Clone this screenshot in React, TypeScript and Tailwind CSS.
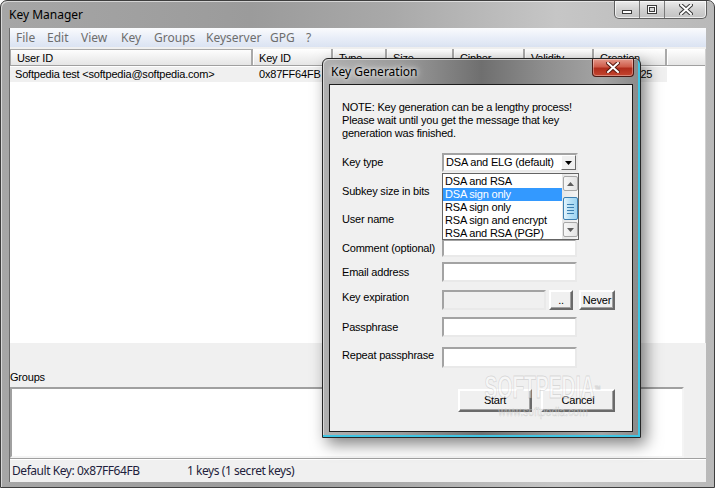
import React from "react";

const ui = "font-['Noto_Sans','Open_Sans',sans-serif]";

function CaptionButtons() {
  return (
    <div className="mr-[7px] flex h-[18px] overflow-hidden rounded-b-[5px] border border-t-0 border-[#5f5f5f] bg-[linear-gradient(#ececec,#d2d2d2_50%,#c2c2c2)] shadow-[inset_0_0_0_1px_rgba(255,255,255,0.7)]">
      <div className="flex w-[25px] items-end justify-center border-r border-[#7a7a7a] pb-[4px]">
        <div className="h-[4px] w-[10px] border border-[#3c3c3c] bg-white" />
      </div>
      <div className="flex w-[25px] items-center justify-center border-r border-[#7a7a7a]">
        <div className="h-[9px] w-[10px] border border-[#3c3c3c] bg-white p-[1px]">
          <div className="h-full w-full border border-[#3c3c3c] bg-[#d8d8d8]" />
        </div>
      </div>
      <div className="flex w-[41px] items-center justify-center">
        <svg width="14" height="11" viewBox="0 0 14 11">
          <path d="M2 1 L12 10 M12 1 L2 10" stroke="#3c3c3c" strokeWidth="4" strokeLinecap="square" />
          <path d="M2 1 L12 10 M12 1 L2 10" stroke="#ffffff" strokeWidth="2" strokeLinecap="square" />
        </svg>
      </div>
    </div>
  );
}

function Field({ disabled, className = "w-[135px]" }: { disabled?: boolean; className?: string }) {
  return (
    <div
      className={`h-full border-2 border-t-[#a3a3a3] border-l-[#a3a3a3] border-r-[#e9e9e9] border-b-[#e9e9e9] ${
        disabled ? "bg-[#f0f0f0]" : "bg-white"
      } ${className}`}
    />
  );
}

function Btn({ label, className }: { label: string; className: string }) {
  return (
    <div
      className={`flex items-center justify-center border-2 border-t-white border-l-white border-r-[#6a6a6a] border-b-[#6a6a6a] bg-[#f0f0f0] shadow-[inset_-1px_-1px_0_#a0a0a0] ${className}`}
    >
      {label}
    </div>
  );
}

function ScrollArrow({ up }: { up?: boolean }) {
  return (
    <div className="flex h-[15px] w-[15px] items-center justify-center rounded-[2px] border border-[#a7a7a7] bg-[linear-gradient(90deg,#f7f7f7,#e3e3e3)]">
      <svg width="7" height="4" viewBox="0 0 7 4">
        <path d={up ? "M0 4 L3.5 0 L7 4 Z" : "M0 0 L3.5 4 L7 0 Z"} fill="#5c5c5c" />
      </svg>
    </div>
  );
}

function Row({
  label,
  top,
  h,
  lift = "",
  children,
}: {
  label: string;
  top: string;
  h: string;
  lift?: string;
  children?: React.ReactNode;
}) {
  return (
    <div className={`flex items-center ${top} ${h}`}>
      <span className={`w-[100px] shrink-0 ${lift}`}>{label}</span>
      {children}
    </div>
  );
}

const columns = [
  { name: "User ID", w: "w-[243px]" },
  { name: "Key ID", w: "w-[80px]" },
  { name: "Type", w: "w-[54px]" },
  { name: "Size", w: "w-[67px]" },
  { name: "Cipher", w: "w-[71px]" },
  { name: "Validity", w: "w-[69px]" },
  { name: "Creation", w: "w-[73px]" },
];

const menu = [
  { name: "File", w: "w-[31px]" },
  { name: "Edit", w: "w-[34px]" },
  { name: "View", w: "w-[40px]" },
  { name: "Key", w: "w-[33px]" },
  { name: "Groups", w: "w-[52px]" },
  { name: "Keyserver", w: "w-[64px]" },
  { name: "GPG", w: "w-[36px]" },
  { name: "?", w: "w-[12px]" },
];

export default function App() {
  return (
    <div className="relative h-[488px] w-[715px] overflow-hidden bg-white font-['Liberation_Sans',Arial,sans-serif] text-[11px] tracking-[-0.2px] text-black">
      {/* main window */}
      <div className="flex h-full w-full flex-col rounded-t-[7px] border border-[#3e3e3e] bg-[linear-gradient(90deg,#a6a6a6,#9b9b9b_35%,#a9a9a9_55%,#c6c6c6_78%,#b9b9b9)] shadow-[inset_1px_1px_0_rgba(255,255,255,0.55)]">
        <div className="flex h-[27px] shrink-0 items-start justify-between">
          <span className={`${ui} pl-[8px] pt-[5px] text-[12px] tracking-normal text-black`}>Key Manager</span>
          <CaptionButtons />
        </div>

        <div className="mx-[8px] mb-[5px] flex flex-1 flex-col border-l border-[#6c6c6c] bg-[#f0f0f0]">
          {/* menu */}
          <div className={`${ui} flex h-[19px] items-center bg-[linear-gradient(#fafbfd,#e9eef8_50%,#dbe3f2)] pl-[6px] text-[12px] tracking-normal text-[#6d6d6d]`}>
            {menu.map((m) => (
              <span key={m.name} className={m.w}>
                {m.name}
              </span>
            ))}
          </div>

          {/* key list */}
          <div className="mt-[2px] flex h-[294px] flex-col border-r border-[#d0d0d0] bg-white">
            <div className="flex h-[17px] border-b border-[#a0a0a0] bg-[linear-gradient(#ffffff,#f2f2f2_50%,#e6e6e6)]">
              {columns.map((c, i) => (
                <div
                  key={c.name}
                  className={`${c.w} flex items-end border-r-2 border-r-[#a9a9a9] pl-[6px] leading-[13px] ${
                    i === 0 ? "border-l border-t border-[#a9a9a9] pl-[5px]" : "shadow-[inset_1px_0_0_#fff]"
                  }`}
                >
                  {c.name}
                </div>
              ))}
              <div className="flex-1 shadow-[inset_1px_0_0_#fff]" />
            </div>
            <div className="mt-[1px] flex h-[15px] w-[657px] items-center bg-[#f0f0f0]">
              <span className="w-[243px] pl-[5px]">Softpedia test &lt;softpedia@softpedia.com&gt;</span>
              <span className="w-[80px] pl-[6px]">0x87FF64FB</span>
              <span className="w-[54px] pl-[6px]">pub/sec</span>
              <span className="w-[67px] pl-[6px]">1024</span>
              <span className="w-[71px] pl-[6px]">DSA/ELG</span>
              <span className="w-[69px] pl-[6px]">Ultimate</span>
              <span className="pl-[4px]">2009-03-25</span>
            </div>
          </div>

          {/* groups */}
          <div className="flex h-[44px] items-end pb-[2px]">Groups</div>
          <div className="h-[71px] w-[674px] border-2 border-t-[#a0a0a0] border-l-[#a0a0a0] border-r-[#f4f4f4] border-b-[#f4f4f4] bg-white" />

          {/* status bar */}
          <div className={`${ui} flex flex-1 items-center border-t border-[#a0a0a0] pl-[2px] text-[12px] tracking-[-0.45px] text-[#1e1e3c] shadow-[inset_0_1px_0_#fff]`}>
            <span className="w-[175px]">Default Key: 0x87FF64FB</span>
            <span>1 keys (1 secret keys)</span>
          </div>
        </div>
      </div>

      {/* Key Generation dialog */}
      <div className="absolute left-[322px] top-[58px] flex h-[380px] w-[319px] flex-col rounded-t-[6px] border border-[#262626] bg-[linear-gradient(90deg,#b0b0b0,#9a9a9a_25%,#6f6f6f_50%,#8e8e8e_70%,#a4a4a4_88%,#8a8a8a)] shadow-[inset_-2px_-2px_0_#3fc6e4,inset_1px_1px_0_rgba(255,255,255,0.5),5px_6px_16px_rgba(0,0,0,0.5)]">
        <div className="flex h-[25px] shrink-0 items-start justify-between">
          <span className={`${ui} pl-[8px] pt-[4px] text-[12px] tracking-normal text-black [text-shadow:0_0_8px_#fff,0_0_4px_#fff]`}>
            Key Generation
          </span>
          <div className="mr-[6px] flex h-[18px] w-[42px] items-center justify-center rounded-b-[4px] border border-t-0 border-[#4a1a14] bg-[linear-gradient(#e4988a,#cf5d4b_45%,#b02d1c_55%,#c4452f)] shadow-[inset_0_0_0_1px_rgba(255,255,255,0.35)]">
            <svg width="14" height="11" viewBox="0 0 14 11">
              <path d="M2 1 L12 10 M12 1 L2 10" stroke="#5a1b12" strokeWidth="4" strokeLinecap="square" />
              <path d="M2 1 L12 10 M12 1 L2 10" stroke="#ffffff" strokeWidth="2" strokeLinecap="square" />
            </svg>
          </div>
        </div>

        <div className="mb-[5px] ml-[6px] mr-[7px] flex-1 border border-[#1c1c1c] bg-[#f0f0f0]">
          <div className="relative h-full pl-[12px]">
            <p className="pt-[16px] leading-[13px]">
              NOTE: Key generation can be a lengthy process!
              <br />
              Please wait until you get the message that key
              <br />
              generation was finished.
            </p>

            <Row label="Key type" top="mt-[13px]" h="h-[19px]">
              <div className="flex h-full w-[136px] items-center border-2 border-t-[#a3a3a3] border-l-[#a3a3a3] border-r-[#e9e9e9] border-b-[#e9e9e9] bg-white">
                <span className="flex-1 pl-[2px]">DSA and ELG (default)</span>
                <div className="flex h-[15px] w-[15px] items-center justify-center border border-t-white border-l-white border-r-[#6a6a6a] border-b-[#6a6a6a] bg-[#f0f0f0]">
                  <svg width="7" height="4" viewBox="0 0 7 4">
                    <path d="M0 0 L3.5 4 L7 0 Z" fill="#000" />
                  </svg>
                </div>
              </div>
            </Row>
            <Row label="Subkey size in bits" top="mt-[10px]" h="h-[19px]">
              <Field />
            </Row>
            <Row label="User name" top="mt-[9px]" h="h-[19px]">
              <Field />
            </Row>
            <Row label="Comment (optional)" top="mt-[10px]" h="h-[18px]">
              <Field />
            </Row>
            <Row label="Email address" top="mt-[5px]" h="h-[20px]">
              <Field />
            </Row>
            <Row label="Key expiration" top="mt-[8px]" h="h-[20px]" lift="pb-[6px]">
              <Field disabled className="w-[104px]" />
              <Btn label=".." className="ml-[3px] h-full w-[24px]" />
              <Btn label="Never" className="ml-[6px] h-full w-[36px]" />
            </Row>
            <Row label="Passphrase" top="mt-[7px]" h="h-[20px]">
              <Field />
            </Row>
            <Row label="Repeat passphrase" top="mt-[10px]" h="h-[21px]" lift="pb-[4px]">
              <Field />
            </Row>

            <div className="mt-[21px] flex pl-[116px]">
              <Btn label="Start" className="h-[23px] w-[74px]" />
              <Btn label="Cancel" className="ml-[9px] h-[23px] w-[74px]" />
            </div>

            {/* open key type list */}
            <div className="absolute left-[112px] top-[88px] flex h-[67px] w-[137px] border border-[#646464] bg-white">
              <div className="w-[119px] pt-[1px] leading-[13px]">
                <div className="pl-[2px]">DSA and RSA</div>
                <div className="bg-[#3399ff] pl-[2px] text-white">DSA sign only</div>
                <div className="pl-[2px]">RSA sign only</div>
                <div className="pl-[2px]">RSA sign and encrypt</div>
                <div className="pl-[2px]">RSA and RSA (PGP)</div>
              </div>
              <div className="flex w-[16px] flex-col items-center bg-[linear-gradient(90deg,#e6e6e6,#f4f4f4)] pt-[2px]">
                <ScrollArrow up />
                <div className="mt-[6px] flex h-[23px] w-[15px] flex-col items-center justify-center gap-[2px] rounded-[2px] border border-[#3c7fb1] bg-[linear-gradient(90deg,#e3f4fc,#b7e0f6_50%,#9dd5f3)]">
                  <div className="h-[1px] w-[7px] bg-[#3c7fb1]" />
                  <div className="h-[1px] w-[7px] bg-[#3c7fb1]" />
                  <div className="h-[1px] w-[7px] bg-[#3c7fb1]" />
                  <div className="h-[1px] w-[7px] bg-[#3c7fb1]" />
                </div>
                <div className="mt-[2px]">
                  <ScrollArrow />
                </div>
              </div>
            </div>

            {/* watermark */}
            <div className="pointer-events-none absolute left-[148px] top-[289px] flex w-[130px] flex-col items-center tracking-normal text-white/45">
              <span className="inline-block origin-center scale-x-[0.62] whitespace-nowrap text-[31px] font-bold leading-[28px] [-webkit-text-stroke:1px_rgba(120,120,120,0.22)]">
                SOFTPEDIA<sup className="text-[10px]">™</sup>
              </span>
              <span className="mt-[4px] inline-block scale-x-[0.8] whitespace-nowrap text-[13px] leading-[12px] [-webkit-text-stroke:0.5px_rgba(120,120,120,0.3)]">
                www.softpedia.com
              </span>
            </div>
          </div>
        </div>
      </div>
    </div>
  );
}
